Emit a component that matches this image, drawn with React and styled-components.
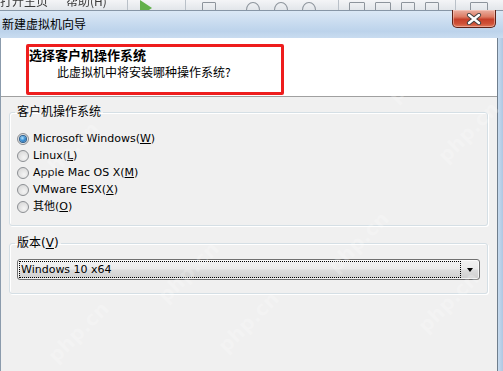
import React from 'react';
import styled, { createGlobalStyle } from 'styled-components';

const GlobalStyle = createGlobalStyle`
  *, *::before, *::after {
    box-sizing: border-box;
  }
  html, body {
    margin: 0;
    padding: 0;
    background: #f0f0f0;
  }
  body {
    font-family: "DejaVu Sans", "Noto Sans CJK SC", sans-serif;
  }
`;

const UI_FONT = `"DejaVu Sans", "Noto Sans CJK SC", sans-serif`;
const CJK_FONT = `"Noto Sans CJK SC", "DejaVu Sans", sans-serif`;

const Window = styled.div`
  position: relative;
  width: 503px;
  height: 371px;
  overflow: hidden;
  display: flex;
  flex-direction: column;
  background: #f0f0f0;
`;

// strip of the app behind the dialog, mostly hidden
const BackStrip = styled.div`
  height: 10px;
  flex-shrink: 0;
  display: flex;
  align-items: flex-end;
  overflow: hidden;
  background: linear-gradient(#f4f5f7, #e2e6ea);
  filter: blur(0.4px);
`;

const BackText = styled.span`
  flex-shrink: 0;
  height: 18px;
  line-height: 18px;
  font-family: ${CJK_FONT};
  font-size: 12px;
  color: #3a3a3a;
  margin-left: ${p => p.$gap || 0}px;
`;

const BackSep = styled.span`
  flex-shrink: 0;
  width: 1px;
  height: 10px;
  background: #b9c0c8;
  margin-left: ${p => p.$gap || 0}px;
`;

const BackPlay = styled.span`
  flex-shrink: 0;
  margin-left: ${p => p.$gap || 0}px;
  width: 0;
  height: 0;
  border-left: 12px solid #62b04a;
  border-top: 8px solid transparent;
  border-bottom: 8px solid transparent;
  margin-bottom: -6px;
`;

const BackBox = styled.span`
  flex-shrink: 0;
  margin-left: ${p => p.$gap || 0}px;
  width: ${p => p.$w || 14}px;
  height: 16px;
  border: 1px solid #8d949c;
  border-radius: ${p => (p.$round ? '50%' : '1px')};
  margin-bottom: -8px;
`;

const TitleBar = styled.div`
  height: 28px;
  flex-shrink: 0;
  border-top: 1px solid #8796a6;
  display: flex;
  justify-content: space-between;
  align-items: flex-start;
  padding-left: 2px;
  background: linear-gradient(180deg, #dbe8f5 0%, #c8dbef 45%, #bcd3eb 75%, #c9dcf0 100%);
`;

const TitleText = styled.span`
  margin-top: 5px;
  font-family: ${CJK_FONT};
  font-size: 12px;
  line-height: 16px;
  color: #000;
`;

const CloseButton = styled.div`
  width: 44px;
  height: 18px;
  margin-right: 7px;
  margin-top: -1px;
  border: 1px solid #5e2217;
  border-top: none;
  border-radius: 0 0 5px 5px;
  background: linear-gradient(180deg, #eab0a2 0%, #dd7b64 40%, #c6402a 55%, #cf5137 80%, #e07a5c 100%);
  box-shadow: inset 0 0 0 1px rgba(255, 220, 210, 0.45);
  display: flex;
  align-items: center;
  justify-content: center;
`;

const Frame = styled.div`
  flex: 1;
  display: flex;
  min-height: 0;
`;

const LeftEdge = styled.div`
  width: 1px;
  background: #8b9bac;
`;

const RightEdge = styled.div`
  width: 5px;
  background: linear-gradient(90deg, #c7dbef, #aec7e2);
`;

const Content = styled.div`
  flex: 1;
  display: flex;
  flex-direction: column;
  border-right: 1px solid #6f7e8d;
  min-width: 0;
`;

const Header = styled.div`
  height: 59px;
  flex-shrink: 0;
  background: #fff;
  border-bottom: 1px solid #a0a0a0;
  padding: 6px 0 0 25px;
`;

const Callout = styled.div`
  width: 258px;
  height: 51px;
  border: 3px solid #ee1d1d;
  border-radius: 2px;
`;

const Heading = styled.div`
  font-family: ${CJK_FONT};
  font-size: 13px;
  font-weight: 700;
  line-height: 16px;
  color: #000;
`;

const SubHeading = styled.div`
  margin-left: 28px;
  font-family: ${CJK_FONT};
  font-size: 12px;
  line-height: 17px;
  color: #000;
`;

const Body = styled.div`
  flex: 1;
  background: #f0f0f0;
  padding: 7px 9px 0 8px;
`;

const Group = styled.fieldset`
  margin: 0 0 ${p => p.$gapAfter || 0}px;
  padding: ${p => p.$pad};
  border: 1px solid #d5dfe5;
  border-radius: 3px;
  box-shadow: inset 1px 1px 0 #fff, 1px 1px 0 #fff;
  min-width: 0;
`;

const GroupLabel = styled.legend`
  padding: 0 2px;
  margin-left: -2px;
  font-family: ${UI_FONT};
  font-size: 12px;
  line-height: 16px;
  color: #000;
`;

const OptionList = styled.div`
  display: flex;
  flex-direction: column;
`;

const OptionRow = styled.label`
  height: 17px;
  display: flex;
  align-items: center;
  gap: 4px;
  font-family: ${UI_FONT};
  font-size: 11px;
  line-height: 17px;
  color: #000;
`;

const RadioCircle = styled.span`
  width: 12px;
  height: 12px;
  border-radius: 50%;
  border: 1px solid #8c8f93;
  background: radial-gradient(circle at 60% 65%, #f4f4f4 0%, #dcdcdc 70%, #cfcfcf 100%);
  display: flex;
  align-items: center;
  justify-content: center;
  flex-shrink: 0;
`;

const RadioDot = styled.span`
  width: 6px;
  height: 6px;
  border-radius: 50%;
  background: radial-gradient(circle at 40% 35%, #b6e2fb 0%, #3f95d8 45%, #1a5495 100%);
  box-shadow: 0 0 0 1px #2d5f8e;
`;

const Key = styled.span`
  text-decoration: underline;
  text-underline-offset: 1px;
`;

const Combo = styled.div`
  height: 21px;
  border: 1px solid #707070;
  border-radius: 3px;
  padding: 1px 0 1px 1px;
  display: flex;
  align-items: stretch;
  background: linear-gradient(180deg, #f2f2f2 0%, #ebebeb 48%, #dddddd 52%, #cfcfcf 100%);
  box-shadow: inset 0 0 0 1px rgba(255, 255, 255, 0.7);
`;

const ComboValue = styled.div`
  flex: 1;
  border: 1px dotted #000;
  padding-left: 1px;
  font-family: ${UI_FONT};
  font-size: 11px;
  line-height: 15px;
  color: #000;
`;

const ComboArrow = styled.div`
  width: 18px;
  display: flex;
  align-items: center;
  justify-content: center;
  &::before {
    content: '';
    width: 0;
    height: 0;
    border-left: 3.5px solid transparent;
    border-right: 3.5px solid transparent;
    border-top: 4px solid #000;
  }
`;

const Watermarks = styled.div`
  position: absolute;
  inset: 0;
  pointer-events: none;
  overflow: hidden;
`;

const Mark = styled.span`
  position: absolute;
  left: ${p => p.$x}px;
  top: ${p => p.$y}px;
  transform: rotate(-45deg);
  font-family: "DejaVu Sans", sans-serif;
  font-weight: 700;
  font-size: 20px;
  color: rgba(255, 255, 255, 0.22);
  white-space: nowrap;
`;

const CloseGlyph = () => (
  <svg width="16" height="12" viewBox="0 0 16 12">
    <path d="M3 2 L13 10 M13 2 L3 10" stroke="#404040" strokeWidth="4.2" strokeLinecap="round" />
    <path d="M3 2 L13 10 M13 2 L3 10" stroke="#ffffff" strokeWidth="2.4" strokeLinecap="round" />
  </svg>
);

const Radio = ({ checked, children }) => (
  <OptionRow>
    <RadioCircle>{checked && <RadioDot />}</RadioCircle>
    <span>{children}</span>
  </OptionRow>
);

const osOptions = [
  { name: 'Microsoft Windows', key: 'W', checked: true },
  { name: 'Linux', key: 'L' },
  { name: 'Apple Mac OS X', key: 'M' },
  { name: 'VMware ESX', key: 'X' },
  { name: '其他', key: 'O' },
];

const marks = [
  [30, 140], [380, 60], [430, 120], [150, 260], [320, 230],
  [210, 310], [410, 290], [40, 320],
];

export default function App() {
  return (
    <>
      <GlobalStyle />
      <Window>
        <BackStrip>
          <BackText>打开主页</BackText>
          <BackText $gap={18}>帮助(H)</BackText>
          <BackSep $gap={20} />
          <BackPlay $gap={12} />
          <BackSep $gap={33} />
          <BackBox $gap={16} />
          <BackBox $gap={30} $round />
          <BackBox $gap={14} $round />
          <BackBox $gap={14} $round />
          <BackSep $gap={22} />
          <BackBox $gap={10} $w={16} />
          <BackBox $gap={10} $w={16} />
          <BackBox $gap={10} $w={14} />
          <BackBox $gap={10} $w={14} />
          <BackSep $gap={16} />
          <BackBox $gap={14} $w={18} />
        </BackStrip>
        <TitleBar>
          <TitleText>新建虚拟机向导</TitleText>
          <CloseButton>
            <CloseGlyph />
          </CloseButton>
        </TitleBar>
        <Frame>
          <LeftEdge />
          <Content>
            <Header>
              <Callout>
                <Heading>选择客户机操作系统</Heading>
                <SubHeading>此虚拟机中将安装哪种操作系统?</SubHeading>
              </Callout>
            </Header>
            <Body>
              <Group $pad="10px 7px 10px" $gapAfter={9}>
                <GroupLabel>客户机操作系统</GroupLabel>
                <OptionList>
                  {osOptions.map(o => (
                    <Radio key={o.key} checked={o.checked}>
                      {o.name}(<Key>{o.key}</Key>)
                    </Radio>
                  ))}
                </OptionList>
              </Group>
              <Group $pad="8px 7px 13px">
                <GroupLabel>
                  版本(<Key>V</Key>)
                </GroupLabel>
                <Combo>
                  <ComboValue>Windows 10 x64</ComboValue>
                  <ComboArrow />
                </Combo>
              </Group>
            </Body>
          </Content>
          <RightEdge />
        </Frame>
        <Watermarks>
          {marks.map(([x, y], i) => (
            <Mark key={i} $x={x} $y={y}>php.cn</Mark>
          ))}
        </Watermarks>
      </Window>
    </>
  );
}
